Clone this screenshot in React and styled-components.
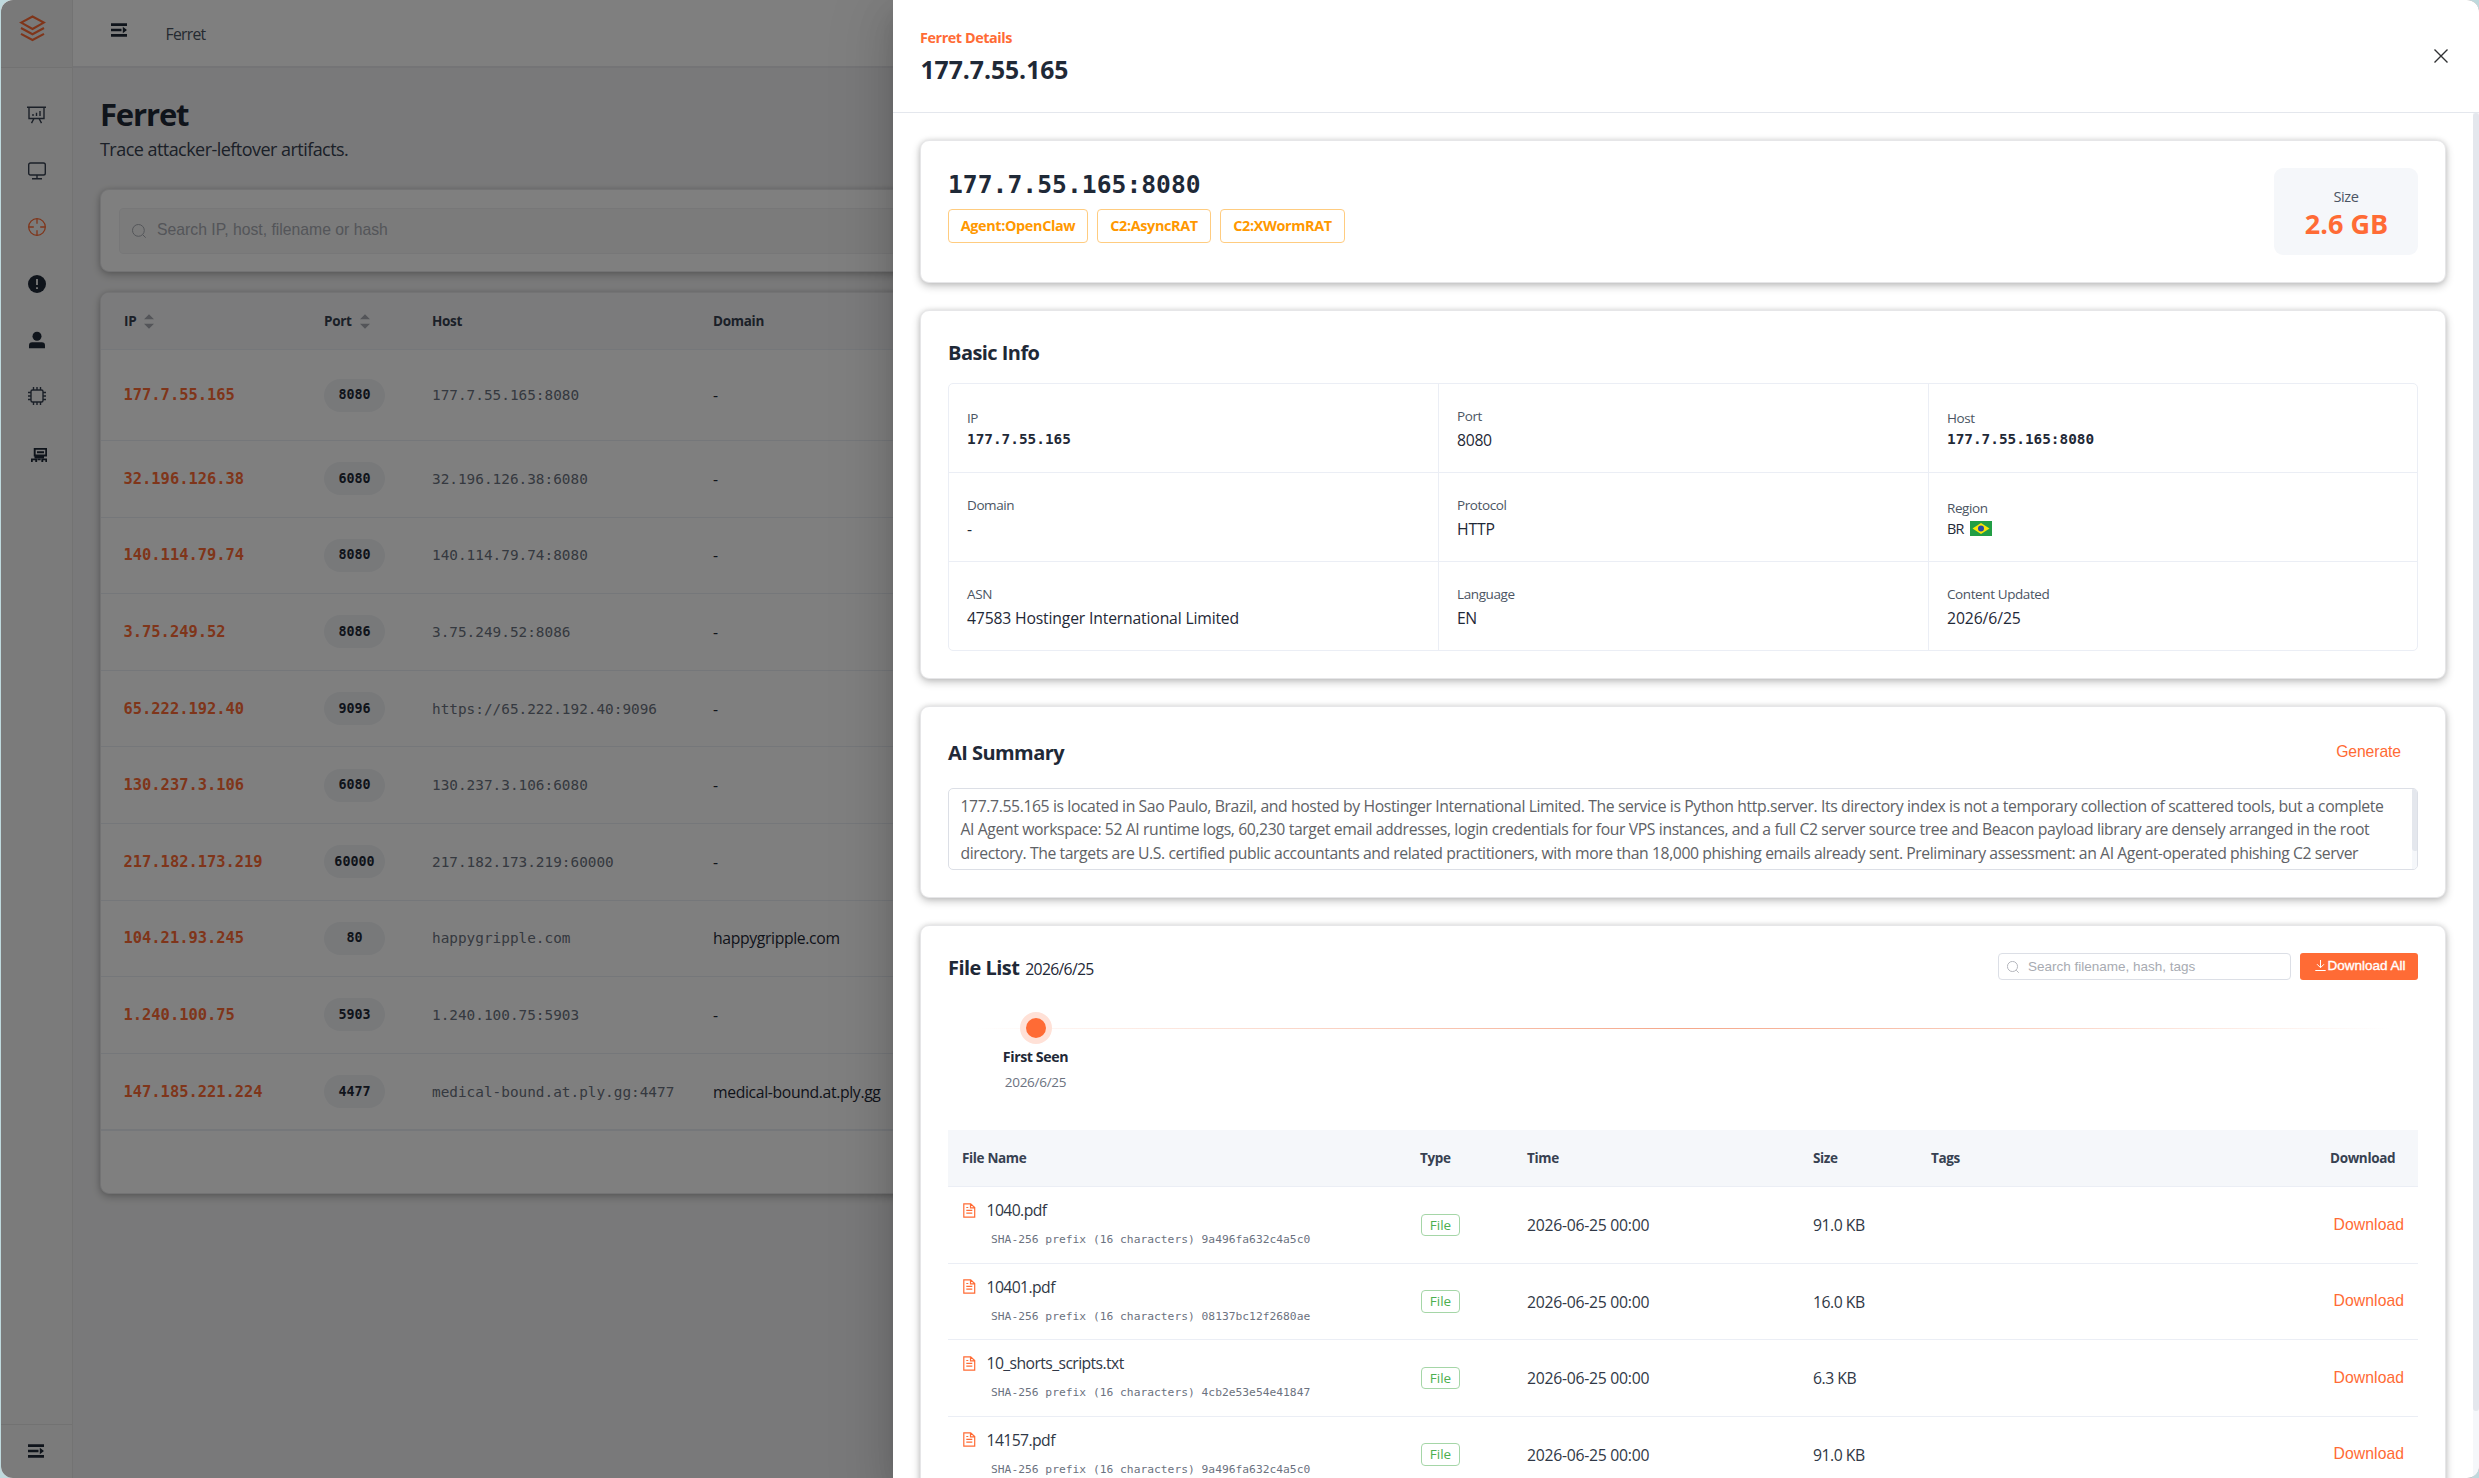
import React from 'react';
import styled, { createGlobalStyle } from 'styled-components';

const SANS = '"Open Sans", "Noto Sans", sans-serif';
const ARIAL = '"Liberation Sans", Arial, sans-serif';
const MONO = '"DejaVu Sans Mono", monospace';
const ORANGE = '#ff6b35';
const INK = '#1f2937';

const Global = createGlobalStyle`
  * { box-sizing: border-box; }
  body { margin: 0; background: #bfd9dd; font-family: ${SANS}; color: ${INK}; overflow: hidden; }
  svg { display: block; flex: none; }
`;

const Frame = styled.div`
  position: relative; display: flex; width: 2478px; height: 1478px; margin-left: 1px;
  border-radius: 12px; overflow: hidden; background: #f3f3f4;
`;

/* ---------- side rail ---------- */
const Rail = styled.aside`
  display: flex; flex-direction: column; width: 72px; flex: none;
  background: #f6f6f6; border-right: 1px solid #e6e6e6;
`;
const RailLogo = styled.div`
  height: 68px; padding: 15px 0 0 18px; background: #f2f2f2; border-bottom: 1px solid #e4e4e4;
`;
const RailNav = styled.nav`
  display: flex; flex-direction: column; flex: 1; align-items: center; padding-top: 19px;
`;
const RailItem = styled.div`
  display: flex; align-items: center; justify-content: center; height: 56.2px; width: 72px;
  padding-left: ${(p) => p.$shift || 0}px; padding-top: ${(p) => p.$drop || 0}px;
  color: ${(p) => (p.$active ? ORANGE : '#374151')};
`;
const RailFoot = styled.div`
  display: flex; height: 54px; padding: 19px 0 0 27px; border-top: 1px solid #e4e4e4; color: ${INK};
`;

/* ---------- page ---------- */
const Page = styled.div`flex: 1; display: flex; flex-direction: column; min-width: 0;`;
const TopBar = styled.header`
  display: flex; height: 68px; padding: 23px 0 0 38px; background: #fff; border-bottom: 2px solid #e9e9ec;
`;
const Crumb = styled.div`
  margin: -0.5px 0 0 38.5px; font-size: 15.75px; line-height: 22px; letter-spacing: -0.738px; color: #4b5563;
`;
const Main = styled.main`padding: 27px 28px 0 27px;`;
const PageTitle = styled.h1`
  margin: 0; height: 39px; font-size: 31px; font-weight: 700; line-height: 39px; letter-spacing: -1.15px;
`;
const PageSub = styled.div`
  height: 30px; font-size: 18px; line-height: 31px; letter-spacing: -0.54px; color: #374151;
`;

const Panel = styled.section`
  background: #fff; border: 1px solid #e6e6e8; border-radius: 9px;
  box-shadow: 0 3px 9px rgba(0, 0, 0, 0.24), 0 0 5px rgba(0, 0, 0, 0.1);
`;
const SearchPanel = styled(Panel)`height: 83px; margin-top: 25px; padding: 18px;`;
const SearchBox = styled.div`
  display: flex; align-items: center; height: 46px; padding: 0 0 1px 12px; gap: 11px;
  background: #f6f7f7; border: 1px solid #efeff1; border-radius: 4px;
  font: 15.75px/22px ${ARIAL}; color: #a8abb2;
`;
const SearchText = styled.span`padding-bottom: 2px;`;
const HostPanel = styled(Panel)`height: 902px; margin-top: 20px; overflow: hidden;`;
const HostRow = styled.div`
  display: grid; grid-template-columns: 200px 108px 281px 1fr; align-items: center;
  height: ${(p) => p.$h}px; padding-left: 23px; background: ${(p) => (p.$head ? '#f6f7f8' : '#fff')};
  border-bottom: 1px solid #ebeef5; font-size: 15.75px; letter-spacing: -0.36px;
  &:last-child { height: 77.6px; border-bottom-width: 2px; }
`;
const HostHead = styled.div`
  display: flex; align-items: center; gap: 8px; font-size: 13.5px; font-weight: 700; letter-spacing: -0.3px; color: #374151;
`;
const HostIp = styled.div`margin-left: -0.5px; font: 700 15.42px/20px ${MONO}; letter-spacing: 0; color: ${ORANGE};`;
const HostName = styled.div`font: 14.39px/20px ${MONO}; letter-spacing: 0; color: #6b7280;`;
const PortPill = styled.div`
  display: flex; align-items: center; justify-content: center; justify-self: start; min-width: 61px; height: 33px;
  padding: 0 10px; border-radius: 17px; background: #f0f2f5; font: 700 13.4px/20px ${MONO}; letter-spacing: 0; color: ${INK};
`;
const Shade = styled.div`position: absolute; inset: 0; background: rgba(0, 0, 0, 0.5);`;

/* ---------- drawer ---------- */
const Drawer = styled.aside`
  position: absolute; top: 0; right: 0; display: flex; flex-direction: column; width: 1586px; height: 1478px;
  background: #fff;
  box-shadow: 0 18px 54px 18px rgba(0, 0, 0, 0.08), 0 13px 36px rgba(0, 0, 0, 0.12), 0 9px 18px -9px rgba(0, 0, 0, 0.16);
`;
const DrawerHead = styled.header`
  display: flex; justify-content: space-between; flex: none; height: 113px; padding: 26px 31px 0 27px;
  border-bottom: 1px solid #e4e7ed;
`;
const Eyebrow = styled.div`
  padding-top: 1px; font-size: 14.4px; font-weight: 700; line-height: 22px; letter-spacing: -0.43px; color: ${ORANGE};
`;
const DrawerTitle = styled.div`margin: 3px 0 0 0.5px; font-size: 24.75px; font-weight: 700; line-height: 36px; letter-spacing: -0.05px;`;
const CloseBtn = styled.div`padding-top: 23px; color: #303133;`;
const DrawerScroll = styled.div`display: flex; flex: 1; min-height: 0;`;
const DrawerBody = styled.div`
  display: flex; flex-direction: column; gap: 27px; width: 1580px; padding: 27px; overflow: hidden;
`;
const Track = styled.div`width: 6px; background: #f5f7fa;`;
const Thumb = styled.div`width: 6px; height: ${(p) => p.$h}px; border-radius: 3px; background: #e4e7ed;`;

const Card = styled(Panel)`flex: none; width: 1526px; height: ${(p) => p.$h}px; padding: 27px;`;
const Hero = styled(Card)`display: flex; justify-content: space-between;`;
const HeroName = styled.div`font: 600 24.65px/33px ${MONO}; letter-spacing: 0.03px;`;
const Tags = styled.div`display: flex; gap: 9px; margin-top: 8px;`;
const Tag = styled.div`
  display: flex; align-items: center; justify-content: center; width: ${(p) => p.$w}px; height: 34px; padding-bottom: 2px;
  border: 1px solid #ffcc80; border-radius: 4px; font-size: 14.4px; font-weight: 700; letter-spacing: -0.34px; color: #ff9800;
`;
const SizeBox = styled.div`
  display: flex; flex-direction: column; align-items: center; width: 144px; height: 87px; padding-top: 17px;
  border-radius: 9px; background: #f5f7fa;
`;
const SizeLabel = styled.div`font-size: 14.625px; line-height: 22px; letter-spacing: -0.5px; color: #4b5563;`;
const SizeValue = styled.div`padding-left: 1px; font-size: 27px; font-weight: 700; line-height: 34px; color: ${ORANGE};`;

const CardTitle = styled.div`
  font-size: 20px; font-weight: 700; line-height: ${(p) => p.$lh}px; letter-spacing: -0.55px;
`;
const TitleDate = styled.span`margin-left: 6px; font-size: 15.75px; font-weight: 400; letter-spacing: -0.7px;`;
const InfoGrid = styled.div`
  display: grid; grid-template-columns: repeat(3, 490px); grid-auto-rows: 89px; width: 1470px; height: 268px;
  margin-top: 16px; border: 1px solid #ebeef5; border-radius: 5px; overflow: hidden;
`;
const InfoCell = styled.div`
  padding: ${(p) => p.$top || 21}px 0 0 18px; border-right: 1px solid #ebeef5; border-bottom: 1px solid #ebeef5;
`;
const InfoLabel = styled.div`font-size: 13.5px; line-height: 22px; letter-spacing: -0.4px; color: #4b5563;`;
const InfoValue = styled.div`font-size: 15.75px; font-weight: 500; line-height: 27px; letter-spacing: ${(p) => p.$ls || -0.18}px;`;
const InfoMono = styled.div`font: 700 14.39px/20px ${MONO};`;
const RegionValue = styled.div`
  display: flex; align-items: center; gap: 6px; height: 18px; font-size: 14.4px; font-weight: 500; letter-spacing: -0.7px;
`;

const SummaryHead = styled.div`display: flex; justify-content: space-between; height: 38px; padding-right: 17px;`;
const LinkBtn = styled.div`
  font: 15.75px/${(p) => p.$lh || 22}px ${ARIAL}; letter-spacing: ${(p) => p.$ls || 0}px; color: ${ORANGE};
`;
const SummaryBox = styled.div`
  position: relative; height: 82px; margin-top: 16px; padding: 5.5px 11.5px; overflow: hidden; border: 1px solid #dcdfe6;
  border-radius: 5px; font-size: 15.75px; line-height: 23.6px; color: #606266; white-space: nowrap;
`;
const SummaryLine = styled.div`letter-spacing: ${(p) => p.$ls}px;`;
const SummaryBar = styled.div`position: absolute; top: -1px; right: -1px; width: 6px; height: 82px; background: #f5f7fa;`;

const FileHead = styled.div`display: flex; align-items: center; height: 27px; gap: 9px;`;
const FileTitle = styled(CardTitle)`padding-top: 4px;`;
const Grow = styled.div`flex: 1;`;
const FileSearch = styled.div`
  display: flex; align-items: center; gap: 9px; width: 293px; height: 27px; padding-left: 8px;
  border: 1px solid #dcdfe6; border-radius: 4px; font: 13.5px/18px ${ARIAL}; color: #a8abb2;
`;
const AllBtn = styled.div`
  display: flex; align-items: center; justify-content: center; width: 118px; height: 27px; padding: 0 0 2px 3px; gap: 1px;
  border-radius: 3px; background: ${ORANGE}; font: 13.5px/18px ${ARIAL}; color: #fff; -webkit-text-stroke: 0.35px #fff;
`;
const Timeline = styled.div`position: relative; height: 150px; padding-top: 32px;`;
const TimeLineBar = styled.div`
  position: absolute; top: 48px; left: 27px; right: 27px; height: 1px;
  background: linear-gradient(90deg, transparent, rgba(240, 120, 75, 0.65), transparent);
`;
const TimePoint = styled.div`position: relative; display: flex; flex-direction: column; align-items: center; width: 175px;`;
const TimeDot = styled.div`
  width: 32px; height: 32px; border: 6px solid #ffe1d7; border-radius: 50%; background: ${ORANGE};
`;
const TimeName = styled.div`margin-top: 3px; font-size: 14.2px; font-weight: 700; line-height: 20px; letter-spacing: -0.4px;`;
const TimeDate = styled.div`margin-top: 5px; font-size: 13.5px; line-height: 20px; letter-spacing: -0.277px; color: #6b7280;`;

const FileRow = styled.div`
  display: grid; grid-template-columns: 458px 107px 286px 118px 399px 1fr; align-items: center;
  height: ${(p) => p.$h}px; padding-left: 14px; border-bottom: 1px solid #ebeef5;
  background: ${(p) => (p.$head ? '#f5f7fa' : '#fff')};
`;
const FileTh = styled.div`font-size: 13.5px; font-weight: 700; letter-spacing: -0.35px; color: #374151;`;
const FileName = styled.div`
  display: flex; align-items: center; gap: 10.5px; height: 24px; font-size: 15.75px; letter-spacing: -0.6px; color: #303846;
`;
const FileHash = styled.div`margin: 8px 0 1px 29px; font: 11.29px/20px ${MONO}; color: #6b7280;`;
const FileBadge = styled.div`
  display: flex; align-items: center; justify-content: center; justify-self: start; width: 39px; height: 22.5px;
  border: 1px solid #a5d6a7; border-radius: 4px; margin-left: 1px; font-size: 13.5px; color: #4caf50;
`;
const FileText = styled.div`padding-top: 1px; font-size: 15.75px; letter-spacing: ${(p) => p.$ls}px; color: #303846;`;
const RowLink = styled(LinkBtn)`padding-left: 3.5px;`;

/* ---------- icons ---------- */
const LogoIcon = () => (
  <svg width="27" height="27" viewBox="0 0 27 27" fill="none" stroke={ORANGE} strokeWidth="2.1">
    <path d="M2.2 7.6 13.5 1.5l11.3 6.1L13.5 14z" />
    <path d="M2 13l11.5 6.2L25 13M2 18.8 13.5 25 25 18.8" />
  </svg>
);
const CollapseIcon = () => (
  <svg width="16" height="14" viewBox="0 0 16 14" fill={INK}>
    <path d="M0 .3h16v2.600H0zM0 5.700h10.500v2.600H0zM0 11.100h16v2.600H0zM11.800 3.800 16 7l-4.200 3.200z" />
  </svg>
);
const BoardIcon = () => (
  <svg width="19" height="18" viewBox="0 0 19 18" fill="none" stroke="currentColor" strokeWidth="1.4">
    <path d="M0 1.200h19M2 1.200v11.300h15V1.200M7 12.500l-2.500 4.700M12 12.500l2.500 4.700" />
    <path d="M6 8v2M9.500 6.800V10M13 5v5" />
  </svg>
);
const MonitorIcon = () => (
  <svg width="18" height="18" viewBox="0 0 18 18" fill="none" stroke="currentColor" strokeWidth="1.400">
    <rect x=".7" y="1" width="16.600" height="12" rx="1.800" />
    <path d="M9 13v3.500M4 16.700h10" />
  </svg>
);
const AimIcon = () => (
  <svg width="18" height="18" viewBox="0 0 18 18" fill="none" stroke="currentColor" strokeWidth="1.300">
    <circle cx="9" cy="9" r="8.300" />
    <path d="M9 .8v5M9 12.200v5M.8 9h5M12.200 9h5" />
  </svg>
);
const AlertIcon = () => (
  <svg width="18" height="18" viewBox="0 0 18 18">
    <circle cx="9" cy="9" r="9" fill={INK} />
    <path d="M9 4v6M9 12.200v1.700" stroke="#f6f6f6" strokeWidth="1.800" />
  </svg>
);
const UserIcon = () => (
  <svg width="18" height="18" viewBox="0 0 18 18" fill={INK}>
    <circle cx="9" cy="5.300" r="4.500" />
    <path d="M1 17.200v-2.700a3.200 3.200 0 0 1 3.200-3.200h9.600a3.200 3.200 0 0 1 3.200 3.200v2.700z" />
  </svg>
);
const ChipIcon = () => (
  <svg width="18" height="18" viewBox="0 0 18 18" fill="none" stroke="currentColor" strokeWidth="1.400">
    <rect x="3" y="3" width="12" height="12" rx="1.500" />
    <path d="M5.500 0v3M9 0v3M12.500 0v3M5.500 15v3M9 15v3M12.500 15v3M0 5.500h3M0 9h3M0 12.500h3M15 5.500h3M15 9h3M15 12.500h3" />
  </svg>
);
const HostsIcon = () => (
  <svg width="16" height="14" viewBox="0 0 16 14" fill="none" stroke={INK} strokeWidth="1.900">
    <path d="M3.700.9h11.500v6.600H3.700zM6 4.200h7M9.500 7.500v2.300M3.500 9.500H13" />
    <path d="M.8 14v-2.600h4.400V14M11.300 14v-2.600h4V14M6.500 11.400h3.200" />
  </svg>
);
const SearchIcon = ({ size = 14 }) => (
  <svg width={size} height={size} viewBox="0 0 14 14" fill="none" stroke="#a8abb2" strokeWidth="1">
    <circle cx="6.400" cy="6.400" r="5.900" />
    <path d="M10.800 10.800l2.900 2.900" />
  </svg>
);
const SortIcon = () => (
  <svg width="10" height="15" viewBox="0 0 10 15" fill="#a8abb2">
    <path d="M0 5.300 5 .3l5 5zM0 9.700l5 5 5-5z" />
  </svg>
);
const CloseIcon = () => (
  <svg width="14" height="14" viewBox="0 0 14 14" fill="none" stroke="currentColor" strokeWidth="1.400">
    <path d="M.5.5l13 13M13.500.5l-13 13" />
  </svg>
);
const DownIcon = () => (
  <svg width="11" height="11" viewBox="0 0 11 11" fill="none" stroke="#fff" strokeWidth="1">
    <path d="M5.500 0v7.500M2 4.200l3.500 3.500L9 4.200M.3 10.500h10.400" />
  </svg>
);
const DocIcon = () => (
  <svg width="14" height="15" viewBox="0 0 14 15" fill="none" stroke={ORANGE} strokeWidth="1.200">
    <path d="M1.800.8h6.900l4 3.800v9.600H1.800zM8.500.8v4h4.200M4.300 7.300h6M4.300 10.200h6M4.300 4.500h2" />
  </svg>
);
const BrazilFlag = () => (
  <svg width="22" height="15" viewBox="0 0 22 15">
    <rect width="22" height="15" fill="#229e45" />
    <path d="M2.500 7.500 11 2l8.500 5.500L11 13z" fill="#f8e509" />
    <circle cx="11" cy="7.500" r="3" fill="#2b49a3" />
  </svg>
);

const hosts = [
  ['177.7.55.165', '8080', '177.7.55.165:8080', '-'],
  ['32.196.126.38', '6080', '32.196.126.38:6080', '-'],
  ['140.114.79.74', '8080', '140.114.79.74:8080', '-'],
  ['3.75.249.52', '8086', '3.75.249.52:8086', '-'],
  ['65.222.192.40', '9096', 'https://65.222.192.40:9096', '-'],
  ['130.237.3.106', '6080', '130.237.3.106:6080', '-'],
  ['217.182.173.219', '60000', '217.182.173.219:60000', '-'],
  ['104.21.93.245', '80', 'happygripple.com', 'happygripple.com'],
  ['1.240.100.75', '5903', '1.240.100.75:5903', '-'],
  ['147.185.221.224', '4477', 'medical-bound.at.ply.gg:4477', 'medical-bound.at.ply.gg'],
];
const files = [
  ['1040.pdf', '9a496fa632c4a5c0', '91.0 KB'],
  ['10401.pdf', '08137bc12f2680ae', '16.0 KB'],
  ['10_shorts_scripts.txt', '4cb2e53e54e41847', '6.3 KB'],
  ['14157.pdf', '9a496fa632c4a5c0', '91.0 KB'],
];
const summary = [
  ['177.7.55.165 is located in Sao Paulo, Brazil, and hosted by Hostinger International Limited. The service is Python http.server. Its directory index is not a temporary collection of scattered tools, but a complete', -0.395],
  ['AI Agent workspace: 52 AI runtime logs, 60,230 target email addresses, login credentials for four VPS instances, and a full C2 server source tree and Beacon payload library are densely arranged in the root', -0.387],
  ['directory. The targets are U.S. certified public accountants and related practitioners, with more than 18,000 phishing emails already sent. Preliminary assessment: an AI Agent-operated phishing C2 server', -0.42],
];

const Info = ({ label, value, ls }) => (
  <InfoCell>
    <InfoLabel>{label}</InfoLabel>
    <InfoValue $ls={ls}>{value}</InfoValue>
  </InfoCell>
);
const InfoCode = ({ label, value }) => (
  <InfoCell $top={23}>
    <InfoLabel>{label}</InfoLabel>
    <InfoMono>{value}</InfoMono>
  </InfoCell>
);

export default function App() {
  return (
    <>
      <Global />
      <Frame>
        <Rail>
          <RailLogo><LogoIcon /></RailLogo>
          <RailNav>
            <RailItem><BoardIcon /></RailItem>
            <RailItem><MonitorIcon /></RailItem>
            <RailItem $active><AimIcon /></RailItem>
            <RailItem><AlertIcon /></RailItem>
            <RailItem><UserIcon /></RailItem>
            <RailItem><ChipIcon /></RailItem>
            <RailItem $shift={5} $drop={5}><HostsIcon /></RailItem>
          </RailNav>
          <RailFoot><CollapseIcon /></RailFoot>
        </Rail>
        <Page>
          <TopBar>
            <CollapseIcon />
            <Crumb>Ferret</Crumb>
          </TopBar>
          <Main>
            <PageTitle>Ferret</PageTitle>
            <PageSub>Trace attacker-leftover artifacts.</PageSub>
            <SearchPanel>
              <SearchBox><SearchIcon /><SearchText>Search IP, host, filename or hash</SearchText></SearchBox>
            </SearchPanel>
            <HostPanel>
              <HostRow $head $h={57}>
                <HostHead>IP<SortIcon /></HostHead>
                <HostHead>Port<SortIcon /></HostHead>
                <HostHead>Host</HostHead>
                <HostHead>Domain</HostHead>
              </HostRow>
              {hosts.map(([ip, port, host, domain], i) => (
                <HostRow key={ip} $h={i === 0 ? 91 : 76.6}>
                  <HostIp>{ip}</HostIp>
                  <PortPill>{port}</PortPill>
                  <HostName>{host}</HostName>
                  <div>{domain}</div>
                </HostRow>
              ))}
            </HostPanel>
          </Main>
        </Page>
        <Shade />
        <Drawer>
          <DrawerHead>
            <div>
              <Eyebrow>Ferret Details</Eyebrow>
              <DrawerTitle>177.7.55.165</DrawerTitle>
            </div>
            <CloseBtn><CloseIcon /></CloseBtn>
          </DrawerHead>
          <DrawerScroll>
            <DrawerBody>
              <Hero $h={143}>
                <div>
                  <HeroName>177.7.55.165:8080</HeroName>
                  <Tags>
                    <Tag $w={140}>Agent:OpenClaw</Tag>
                    <Tag $w={114}>C2:AsyncRAT</Tag>
                    <Tag $w={125}>C2:XWormRAT</Tag>
                  </Tags>
                </div>
                <SizeBox>
                  <SizeLabel>Size</SizeLabel>
                  <SizeValue>2.6 GB</SizeValue>
                </SizeBox>
              </Hero>
              <Card $h={369}>
                <CardTitle $lh={29}>Basic Info</CardTitle>
                <InfoGrid>
                  <InfoCode label="IP" value="177.7.55.165" />
                  <Info label="Port" value="8080" ls={-0.3} />
                  <InfoCode label="Host" value="177.7.55.165:8080" />
                  <Info label="Domain" value="-" />
                  <Info label="Protocol" value="HTTP" />
                  <InfoCell $top={24}>
                    <InfoLabel>Region</InfoLabel>
                    <RegionValue>BR<BrazilFlag /></RegionValue>
                  </InfoCell>
                  <Info label="ASN" value="47583 Hostinger International Limited" />
                  <Info label="Language" value="EN" ls={-0.5} />
                  <Info label="Content Updated" value="2026/6/25" ls={-0.1} />
                </InfoGrid>
              </Card>
              <Card $h={192}>
                <SummaryHead>
                  <CardTitle $lh={37}>AI Summary</CardTitle>
                  <LinkBtn $lh={35} $ls={-0.1}>Generate</LinkBtn>
                </SummaryHead>
                <SummaryBox>
                  {summary.map(([line, ls]) => <SummaryLine key={line} $ls={ls}>{line}</SummaryLine>)}
                  <SummaryBar><Thumb $h={63} /></SummaryBar>
                </SummaryBox>
              </Card>
              <Card $h={700}>
                <FileHead>
                  <FileTitle $lh={29}>File List<TitleDate>2026/6/25</TitleDate></FileTitle>
                  <Grow />
                  <FileSearch><SearchIcon size={12} />Search filename, hash, tags</FileSearch>
                  <AllBtn><DownIcon />Download All</AllBtn>
                </FileHead>
                <Timeline>
                  <TimeLineBar />
                  <TimePoint>
                    <TimeDot />
                    <TimeName>First Seen</TimeName>
                    <TimeDate>2026/6/25</TimeDate>
                  </TimePoint>
                </Timeline>
                <FileRow $head $h={57}>
                  <FileTh>File Name</FileTh>
                  <FileTh>Type</FileTh>
                  <FileTh>Time</FileTh>
                  <FileTh>Size</FileTh>
                  <FileTh>Tags</FileTh>
                  <FileTh>Download</FileTh>
                </FileRow>
                {files.map(([name, hash, size]) => (
                  <FileRow key={name} $h={76.5}>
                    <div>
                      <FileName><DocIcon />{name}</FileName>
                      <FileHash>SHA-256 prefix (16 characters) {hash}</FileHash>
                    </div>
                    <FileBadge>File</FileBadge>
                    <FileText $ls={-0.27}>2026-06-25 00:00</FileText>
                    <FileText $ls={-0.48}>{size}</FileText>
                    <div />
                    <RowLink $ls={0.08}>Download</RowLink>
                  </FileRow>
                ))}
              </Card>
            </DrawerBody>
            <Track><Thumb $h={1298} /></Track>
          </DrawerScroll>
        </Drawer>
      </Frame>
    </>
  );
}
